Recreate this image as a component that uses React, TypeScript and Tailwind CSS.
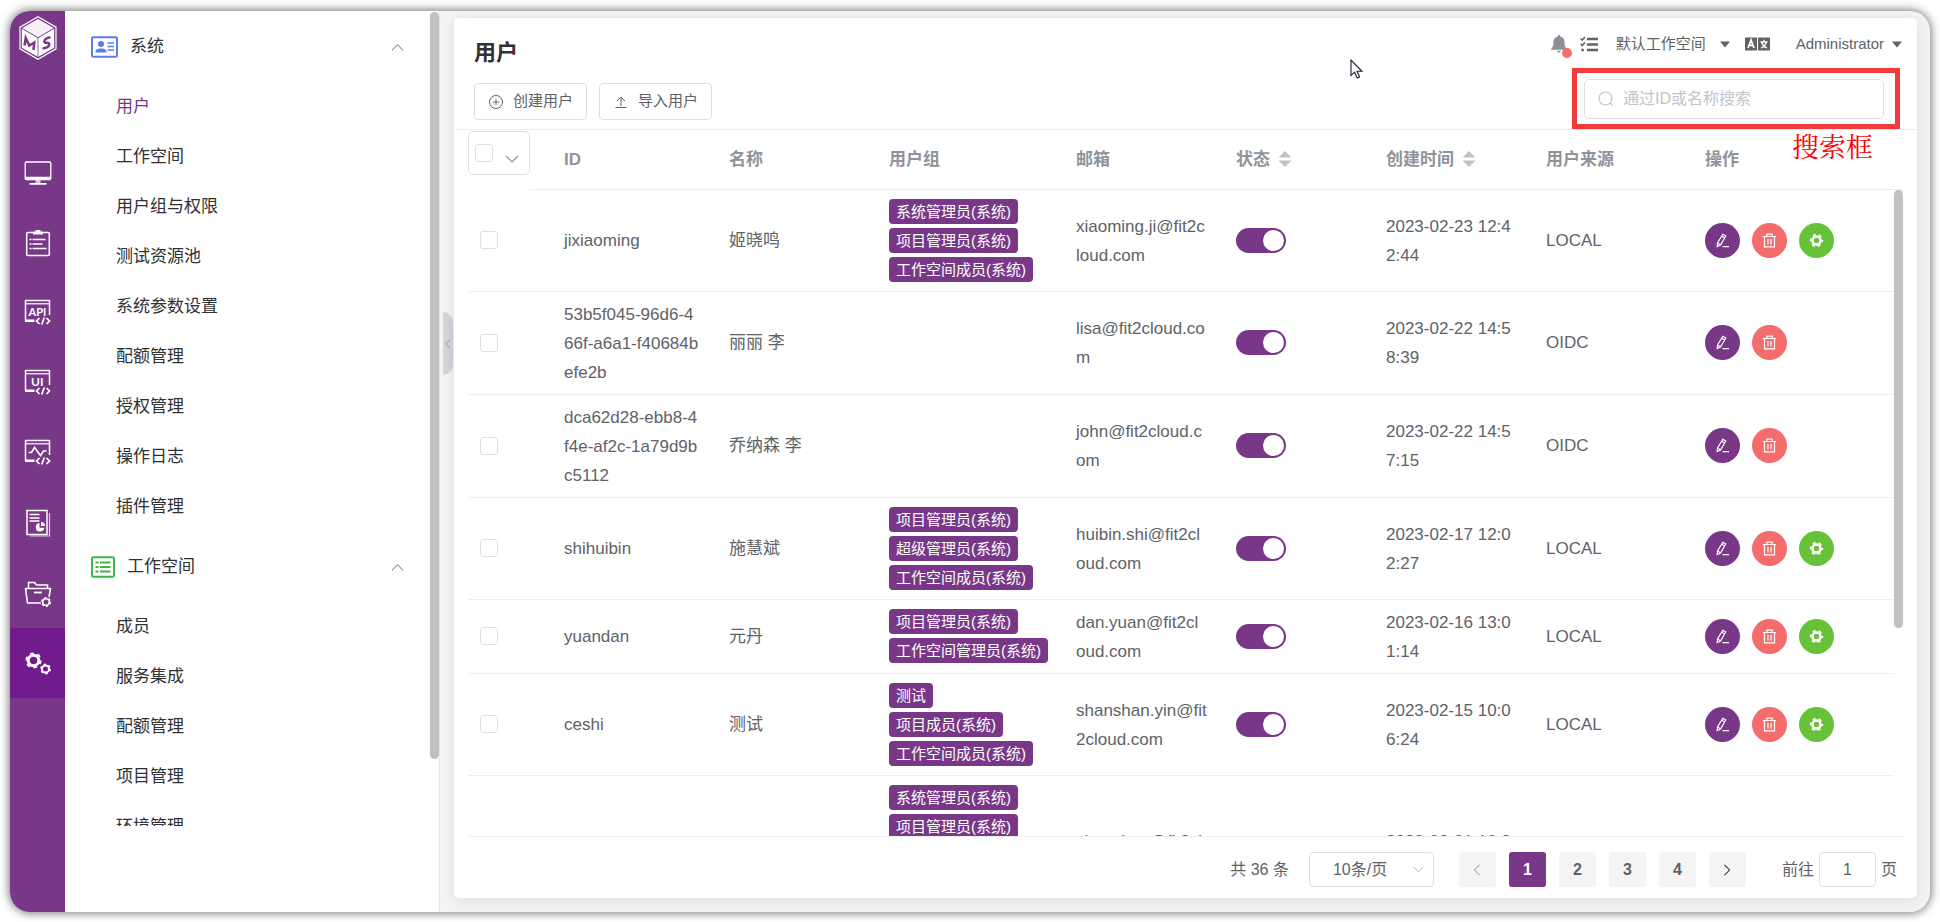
import React from "react";

type User = {
  id: string;
  name: string;
  groups: string[];
  email: string;
  created: string;
  source: "LOCAL" | "OIDC";
};

const users: User[] = [
  {
    id: "jixiaoming",
    name: "姬晓鸣",
    groups: ["系统管理员(系统)", "项目管理员(系统)", "工作空间成员(系统)"],
    email: "xiaoming.ji@fit2cloud.com",
    created: "2023-02-23 12:42:44",
    source: "LOCAL",
  },
  {
    id: "53b5f045-96d6-466f-a6a1-f40684befe2b",
    name: "丽丽 李",
    groups: [],
    email: "lisa@fit2cloud.com",
    created: "2023-02-22 14:58:39",
    source: "OIDC",
  },
  {
    id: "dca62d28-ebb8-4f4e-af2c-1a79d9bc5112",
    name: "乔纳森 李",
    groups: [],
    email: "john@fit2cloud.com",
    created: "2023-02-22 14:57:15",
    source: "OIDC",
  },
  {
    id: "shihuibin",
    name: "施慧斌",
    groups: ["项目管理员(系统)", "超级管理员(系统)", "工作空间成员(系统)"],
    email: "huibin.shi@fit2cloud.com",
    created: "2023-02-17 12:02:27",
    source: "LOCAL",
  },
  {
    id: "yuandan",
    name: "元丹",
    groups: ["项目管理员(系统)", "工作空间管理员(系统)"],
    email: "dan.yuan@fit2cloud.com",
    created: "2023-02-16 13:01:14",
    source: "LOCAL",
  },
  {
    id: "ceshi",
    name: "测试",
    groups: ["测试", "项目成员(系统)", "工作空间成员(系统)"],
    email: "shanshan.yin@fit2cloud.com",
    created: "2023-02-15 10:06:24",
    source: "LOCAL",
  },
  {
    id: "xianghao",
    name: "向浩",
    groups: ["系统管理员(系统)", "项目管理员(系统)", "项目成员(系统)", "工作空间成员(系统)", "工作空间管理员(系统)"],
    email: "xiang.hao@fit2cloud.com",
    created: "2023-02-01 10:26:11",
    source: "LOCAL",
  },
];

const systemItems = ["用户", "工作空间", "用户组与权限", "测试资源池", "系统参数设置", "配额管理", "授权管理", "操作日志", "插件管理"];
const workspaceItems = ["成员", "服务集成", "配额管理", "项目管理", "环境管理"];

/* ---------- icons ---------- */

function Logo() {
  return (
    <svg width="38" height="44" viewBox="0 0 38 44" fill="none" aria-hidden="true">
      <path d="M19 .8L37 11.200v21.600L19 43.200 1 32.800V11.200z" stroke="#fff" strokeWidth="1.200" />
      <path d="M19 3L34.800 12 19 21.200 3.200 12z" fill="#f6f1f8" />
      <path d="M2.800 12.800l15.800 9.200v18.800L2.800 31.700z" fill="#fff" />
      <path d="M35.200 12.800L19.400 22v18.800l15.800-9.100z" fill="#fff" />
      <path d="M5.500 29.500l1.200-7.500 3.600 7.500 5-3-.8 7.500" stroke="#783887" strokeWidth="2.500" />
      <path d="M31.500 21.500c-2.500-.3-6 1.500-6.200 4-.2 2.300 5.300.3 5 3-.3 2.400-4 4-6.800 3.700" stroke="#783887" strokeWidth="2.500" />
    </svg>
  );
}

function CodeMark() {
  return <path d="M15.500 19l-3 3 3 3M22.500 19l3 3-3 3M20.300 18.500l-2.600 7" stroke="#fff" strokeWidth="1.700" />;
}

function WindowFrame({ children }: { children?: React.ReactNode }) {
  return (
    <svg width="28" height="28" viewBox="0 0 28 28" fill="none" aria-hidden="true">
      <path d="M10 21.500H1.500V1.500h24V16" stroke="#fff" strokeWidth="1.500" strokeLinejoin="round" />
      <path d="M1.500 4.800h24" stroke="#fff" strokeWidth="1.200" />
      <path d="M1 21.800h9.500" stroke="#fff" strokeWidth="2.400" />
      {children}
      <CodeMark />
    </svg>
  );
}

const railIcons: { label: string; icon: React.ReactNode }[] = [
  {
    label: "工作台",
    icon: (
      <svg width="28" height="28" viewBox="0 0 28 28" fill="none" aria-hidden="true">
        <rect x="1.200" y="3" width="25.600" height="17.500" rx="1.200" stroke="#fff" strokeWidth="1.300" />
        <path d="M1 19h26" stroke="#fff" strokeWidth="2.600" />
        <path d="M14 20v4" stroke="#fff" strokeWidth="5" opacity=".7" />
        <path d="M5.500 24.800h17" stroke="#fff" strokeWidth="1.800" />
      </svg>
    ),
  },
  {
    label: "测试跟踪",
    icon: (
      <svg width="28" height="28" viewBox="0 0 28 28" fill="none" aria-hidden="true">
        <path d="M9 3.500H3.700a1 1 0 0 0-1 1v21a1 1 0 0 0 1 1h20.600a1 1 0 0 0 1-1v-21a1 1 0 0 0-1-1H19" stroke="#fff" strokeWidth="1.500" />
        <path d="M9 5.500V2.500h2.500V1h5v1.500H19v3z" fill="#fff" />
        <path d="M5.500 10.500h2M5.500 15h2M5.500 19.500h2M8.500 10.500h13M8.500 15h10M8.500 19.500h14" stroke="#fff" strokeWidth="1.500" />
      </svg>
    ),
  },
  {
    label: "接口测试",
    icon: (
      <WindowFrame>
        <text x="4.500" y="16.500" fill="#fff" fontFamily="Lato, sans-serif" fontWeight="700" fontSize="11">API</text>
      </WindowFrame>
    ),
  },
  {
    label: "UI 测试",
    icon: (
      <WindowFrame>
        <text x="7" y="17" fill="#fff" fontFamily="Lato, sans-serif" fontWeight="700" fontSize="12">UI</text>
      </WindowFrame>
    ),
  },
  {
    label: "性能测试",
    icon: (
      <WindowFrame>
        <path d="M4.500 13.500h3l3-5 6 8 3-4.500h3" stroke="#fff" strokeWidth="1.600" />
      </WindowFrame>
    ),
  },
  {
    label: "报表统计",
    icon: (
      <svg width="28" height="28" viewBox="0 0 28 28" fill="none" aria-hidden="true">
        <rect x="3" y="1.500" width="20" height="24" stroke="#fff" strokeWidth="1.500" />
        <path d="M25.500 4v23H6" stroke="#fff" strokeWidth="1.200" opacity=".75" />
        <path d="M5.500 5.500h10M5.500 9h10M5.500 12h10" stroke="#fff" strokeWidth="1.500" />
        <path d="M15.500 14a4.300 4.300 0 1 0 4.800 4.800h-4.800z" fill="#fff" />
        <path d="M17 13a4 4 0 0 1 4 4h-4z" fill="#fff" />
      </svg>
    ),
  },
  {
    label: "项目设置",
    icon: (
      <svg width="28" height="28" viewBox="0 0 28 28" fill="none" aria-hidden="true">
        <path d="M4.500 9V3.500h6l2 2.500h11v3" stroke="#fff" strokeWidth="1.500" />
        <path d="M17 24H3.500L1.500 9.500h25L25 18" stroke="#fff" strokeWidth="1.600" strokeLinejoin="round" />
        <path d="M10 13.500h8" stroke="#fff" strokeWidth="1.800" />
        <circle cx="22" cy="23" r="3.300" stroke="#fff" strokeWidth="1.600" />
        <circle cx="22" cy="23" r="4.400" stroke="#fff" strokeWidth="1.200" strokeDasharray="2.300 2.300" />
      </svg>
    ),
  },
  {
    label: "系统设置",
    icon: (
      <svg width="28" height="28" viewBox="0 0 28 28" fill="none" aria-hidden="true">
        <circle cx="9.500" cy="11.500" r="5.300" stroke="#fff" strokeWidth="3" />
        <circle cx="9.500" cy="11.500" r="7.200" stroke="#fff" strokeWidth="1.800" strokeDasharray="3.770 3.770" />
        <circle cx="21.500" cy="20" r="3.500" stroke="#fff" strokeWidth="2" />
        <circle cx="21.500" cy="20" r="4.700" stroke="#fff" strokeWidth="1.400" strokeDasharray="2.460 2.460" />
      </svg>
    ),
  },
];

function Chevron({ dir, size = 14, color = "#909399" }: { dir: "up" | "down" | "left" | "right"; size?: number; color?: string }) {
  const d = {
    up: "M1 10l6-6 6 6",
    down: "M1 4l6 6 6-6",
    left: "M10 1L4 7l6 6",
    right: "M4 1l6 6-6 6",
  }[dir];
  return (
    <svg width={size} height={size} viewBox="0 0 14 14" fill="none" className="shrink-0" aria-hidden="true">
      <path d={d} stroke={color} strokeWidth="1.200" />
    </svg>
  );
}

function Caret() {
  return (
    <svg width="10" height="7" viewBox="0 0 10 7" className="shrink-0" aria-hidden="true">
      <path d="M0 .5h10L5 6.500z" fill="#606266" />
    </svg>
  );
}

function SortArrows() {
  return (
    <svg width="14" height="16" viewBox="0 0 14 16" aria-hidden="true">
      <path d="M.5 6.500h13L7 0zM.5 9.500h13L7 16z" fill="#c0c4cc" />
    </svg>
  );
}

function EditIcon() {
  return (
    <svg width="15" height="15" viewBox="0 0 15 15" fill="none" stroke="#fff" strokeWidth="1.200" aria-hidden="true">
      <path d="M7.800 1.200l3 1.800-5.300 9-3.300 1.600.3-3.600zM6.700 3.200l3 1.800M2.500 10l3 1.800M7.500 13.600h6.500" />
    </svg>
  );
}

function TrashIcon() {
  return (
    <svg width="15" height="15" viewBox="0 0 15 15" fill="none" stroke="#fff" strokeWidth="1.200" aria-hidden="true">
      <path d="M.8 3.500h13.400M4.800 3.300V1.200h5.400v2.100M2.500 3.500v10.300h10V3.500M6 6v5.500M9 6v5.500" />
    </svg>
  );
}

function GearIcon() {
  return (
    <svg width="15" height="15" viewBox="0 0 15 15" fill="none" aria-hidden="true">
      <circle cx="7.500" cy="7.500" r="4" stroke="#fff" strokeWidth="2.600" />
      <circle cx="7.500" cy="7.500" r="5.800" stroke="#fff" strokeWidth="1.800" strokeDasharray="3.040 3.040" strokeDashoffset="1.500" />
    </svg>
  );
}

/* ---------- sidebar ---------- */

function MenuGroup({ title, icon, items, active }: { title: string; icon: React.ReactNode; items: string[]; active?: string }) {
  return (
    <section>
      <button type="button" className="flex h-[70px] w-full items-center pr-[26px] pl-[26px] text-left">
        {icon}
        <span className="ml-3 flex-1">{title}</span>
        <Chevron dir="up" size={13} />
      </button>
      <ul>
        {items.map((item) => (
          <li key={item}>
            <a href="#" className={item === active ? "block pl-[51px] leading-[50px] text-[#783887]" : "block pl-[51px] leading-[50px]"}>
              {item}
            </a>
          </li>
        ))}
      </ul>
    </section>
  );
}

function Sidebar() {
  return (
    <aside className="flex w-[375px] shrink-0 border-r border-[#e4e6ea] bg-white pt-px text-[17px] text-[#303133]">
      <nav className="mb-[86px] min-w-0 flex-1 overflow-hidden" aria-label="设置菜单">
        <MenuGroup
          title="系统"
          active="用户"
          items={systemItems}
          icon={
            <svg width="27" height="22" viewBox="0 0 27 22" fill="none" aria-hidden="true">
              <rect x="1" y="1.200" width="25" height="19.600" rx="1.500" stroke="#5b7bf0" strokeWidth="2" />
              <circle cx="10" cy="8" r="3" fill="#5b7bf0" />
              <path d="M4.500 16.500c0-3 2-4 5.500-4s5.500 1 5.500 4z" fill="#5b7bf0" />
              <path d="M16.500 7h6.500M16.500 10.500h6.500M16.500 14h6.500" stroke="#5b7bf0" strokeWidth="1.500" />
            </svg>
          }
        />
        <MenuGroup
          title="工作空间"
          items={workspaceItems}
          icon={
            <svg width="24" height="22" viewBox="0 0 24 22" fill="none" aria-hidden="true">
              <rect x="1" y="1.200" width="22" height="19.600" rx="1.500" stroke="#3fb54a" strokeWidth="2" />
              <path d="M4.500 6.500h3M4.500 11h3M4.500 15.500h3M9 6.500h10.500M9 11h10.500M9 15.500h10.500" stroke="#3fb54a" strokeWidth="2" />
            </svg>
          }
        />
      </nav>
      <div className="h-[83%] w-[9px] shrink-0 rounded-full bg-[#c1c1c1]" />
    </aside>
  );
}

/* ---------- header ---------- */

function TopBar() {
  return (
    <div className="flex items-center text-[15px] text-[#606266]">
      <button type="button" aria-label="通知" className="relative mr-3 h-[24px] w-[18px]">
        <svg width="18" height="20" viewBox="0 0 18 20" fill="#8d9095" aria-hidden="true">
          <path d="M9 1c.9 0 1.300.6 1.300 1.400 2.900.6 4.200 3 4.200 5.600 0 4 .8 5.500 2.500 7v.8H1V15c1.700-1.500 2.500-3 2.500-7 0-2.600 1.300-5 4.200-5.600C7.700 1.600 8.100 1 9 1zM7 16.800h4c0 1-.8 1.700-2 1.700s-2-.7-2-1.700z" />
        </svg>
        <span className="absolute -right-1 -bottom-0.5 size-2.5 rounded-full bg-[#f56c6c]" />
      </button>
      <button type="button" aria-label="任务中心" className="mr-[18px]">
        <svg width="18" height="17" viewBox="0 0 18 17" fill="none" stroke="#606266" aria-hidden="true">
          <path d="M7 3h11M7 8.500h11M7 14h11" strokeWidth="2.400" />
          <path d="M.6 2.500l1.600 1.600L5 1M.6 8l1.600 1.600L5 6.500" strokeWidth="1.500" />
          <circle cx="2.600" cy="14" r="1" fill="#606266" />
        </svg>
      </button>
      <button type="button" className="mr-[15px] flex items-center gap-[14px]">
        默认工作空间
        <Caret />
      </button>
      <button type="button" aria-label="切换语言" className="mr-[26px]">
        <svg width="25" height="14" viewBox="0 0 25 14" fill="none" aria-hidden="true">
          <rect width="12" height="13" y=".5" fill="#606266" />
          <rect width="12" height="13" x="13" y=".5" fill="#606266" />
          <path d="M3 11l3-8 3 8M4 8.300h4" stroke="#fff" strokeWidth="1.800" />
          <path d="M15.500 5h7M19 2.800V5M21.300 5c-.5 3-2.500 5-5.300 6M16.800 5.500c.8 2.500 2.500 4.500 5.200 5.500" stroke="#fff" strokeWidth="1.300" />
        </svg>
      </button>
      <button type="button" className="flex items-center gap-2">
        Administrator
        <Caret />
      </button>
    </div>
  );
}

function ActionButton({ label, children }: { label: string; children: React.ReactNode }) {
  return (
    <button type="button" className="flex h-[37px] items-center gap-[9px] rounded-[4px] border border-[#dcdfe6] px-[13px] text-[15px] text-[#606266]">
      {children}
      {label}
    </button>
  );
}

function CardHeader() {
  return (
    <header className="flex h-[112px] shrink-0 justify-between border-b border-[#ebeef5] pl-5">
      <div className="pt-[19px]">
        <h1 className="text-[22px] leading-8 font-bold text-[#303133]">用户</h1>
        <div className="mt-[14px] flex gap-3">
          <ActionButton label="创建用户">
            <svg width="16" height="16" viewBox="0 0 16 16" fill="none" stroke="#606266" aria-hidden="true">
              <circle cx="8" cy="8" r="6.500" />
              <path d="M8 5v6M5 8h6" />
            </svg>
          </ActionButton>
          <ActionButton label="导入用户">
            <svg width="16" height="16" viewBox="0 0 16 16" fill="none" stroke="#606266" aria-hidden="true">
              <path d="M8 12V3M4 7l4-4 4 4M2.500 13.500h11" />
            </svg>
          </ActionButton>
        </div>
      </div>
      <div className="flex flex-col items-end pt-[14px]">
        <div className="pr-[15px]">
          <TopBar />
        </div>
        <div className="relative mt-auto mr-[17px] w-[328px] border-5 border-[#f43b3b] pt-[6px] pr-[11px] pb-[5px] pl-[7px]">
          <label className="flex h-[40px] items-center gap-[9px] rounded-[5px] border border-[#dcdfe6] px-[13px]">
            <svg width="16" height="16" viewBox="0 0 16 16" fill="none" stroke="#c0c4cc" strokeWidth="1.200" aria-hidden="true">
              <circle cx="7.500" cy="7.500" r="6.500" />
              <path d="M12.200 12.200l2.500 2.500" />
            </svg>
            <input
              type="text"
              aria-label="搜索"
              placeholder="通过ID或名称搜索"
              className="min-w-0 flex-1 bg-transparent text-[16px] outline-none placeholder:text-[#c0c4cc]"
            />
          </label>
          <span className="absolute top-full right-[22px] mt-1 font-['Noto_Serif_CJK_SC','Noto_Serif_SC',serif] text-[27px] leading-9 text-[#ff0000]">搜索框</span>
        </div>
      </div>
    </header>
  );
}

/* ---------- table ---------- */

const checkboxClass = "block size-[18px] appearance-none rounded-[3px] border border-[#dcdfe6] bg-white checked:bg-[#783887]";

function UserRow({ user }: { user: User }) {
  return (
    <tr className="border-b border-[#ebeef5]">
      <td className="pl-3">
        <input type="checkbox" aria-label={user.id} className={checkboxClass} />
      </td>
      <td />
      <td className="pt-2 pr-[16px] pb-[7px] pl-[14px] break-all">{user.id}</td>
      <td className="px-[13px]">{user.name}</td>
      <td className="px-[13px] py-[7px]">
        {user.groups.map((group) => (
          <div key={group} className="flex h-[29px] items-center">
            <span className="rounded-[4px] bg-[#783887] px-[7px] text-[15px] leading-[25px] whitespace-nowrap text-white">{group}</span>
          </div>
        ))}
      </td>
      <td className="pt-2 pr-[16px] pb-[7px] pl-[13px] break-all">{user.email}</td>
      <td className="px-[13px]">
        <input
          type="checkbox"
          defaultChecked
          aria-label={`${user.id} 状态`}
          className="relative block h-[25px] w-[50px] appearance-none rounded-full bg-[#dcdfe6] after:absolute after:top-[2px] after:left-[2px] after:size-[21px] after:rounded-full after:bg-white checked:bg-[#783887] checked:after:left-[27px]"
        />
      </td>
      <td className="pt-2 pr-[16px] pb-[7px] pl-[13px] break-all">{user.created}</td>
      <td className="px-[13px]">{user.source}</td>
      <td className="px-[12px]">
        <div className="flex gap-3">
          <button type="button" aria-label="编辑" className="flex size-[35px] items-center justify-center rounded-full bg-[#783887]">
            <EditIcon />
          </button>
          <button type="button" aria-label="删除" className="flex size-[35px] items-center justify-center rounded-full bg-[#f56c6c]">
            <TrashIcon />
          </button>
          {user.source === "LOCAL" && (
            <button type="button" aria-label="设置" className="flex size-[35px] items-center justify-center rounded-full bg-[#67c23a]">
              <GearIcon />
            </button>
          )}
        </div>
      </td>
    </tr>
  );
}

function UserTable() {
  return (
    <div className="mr-[14px] ml-[14px] flex min-h-0 flex-1 overflow-hidden border-b border-[#ebeef5]">
      <div className="min-w-0 flex-1">
        <table className="w-full table-fixed border-collapse text-[17px] leading-[29px] text-[#606266]">
          <colgroup>
            <col className="w-[62px]" />
            <col className="w-[20px]" />
            <col className="w-[166px]" />
            <col className="w-[160px]" />
            <col className="w-[187px]" />
            <col className="w-[160px]" />
            <col className="w-[150px]" />
            <col className="w-[160px]" />
            <col className="w-[160px]" />
            <col />
          </colgroup>
          <thead>
            <tr className="h-[59px] text-left text-[#909399]">
              <th className="p-0 align-top">
                <div className="mt-px flex h-[44px] items-center rounded-[5px] border border-[#dcdfe6] pl-1.5">
                  <input type="checkbox" aria-label="全选" className={checkboxClass} />
                  <button type="button" aria-label="选择范围" className="mt-3 ml-3">
                    <Chevron dir="down" />
                  </button>
                </div>
              </th>
              <th className="border-b border-[#ebeef5]" />
              <th className="border-b border-[#ebeef5] pl-[14px]">ID</th>
              <th className="border-b border-[#ebeef5] pl-[13px]">名称</th>
              <th className="border-b border-[#ebeef5] pl-[13px]">用户组</th>
              <th className="border-b border-[#ebeef5] pl-[13px]">邮箱</th>
              <th className="border-b border-[#ebeef5] pl-[13px]">
                <span className="flex items-center gap-2">状态 <SortArrows /></span>
              </th>
              <th className="border-b border-[#ebeef5] pl-[13px]">
                <span className="flex items-center gap-2">创建时间 <SortArrows /></span>
              </th>
              <th className="border-b border-[#ebeef5] pl-[13px]">用户来源</th>
              <th className="border-b border-[#ebeef5] pl-[12px]">操作</th>
            </tr>
          </thead>
          <tbody>
            {users.map((user) => (
              <UserRow key={user.id} user={user} />
            ))}
          </tbody>
        </table>
      </div>
      <div className="flex w-[9px] shrink-0 flex-col">
        <div className="h-[60px] shrink-0 border-b border-[#ebeef5]" />
        <div className="h-[62%] rounded-full bg-[#c1c1c1]" />
      </div>
    </div>
  );
}

/* ---------- pagination ---------- */

function Pagination() {
  return (
    <footer className="flex h-[61px] shrink-0 items-center justify-end pt-1 pr-[20px] text-[16px] text-[#606266]">
      <span>共 36 条</span>
      <div className="relative ml-5 w-[125px]">
        <select aria-label="每页条数" className="h-[35px] w-full appearance-none rounded-[4px] border border-[#dcdfe6] bg-white pl-[23px] outline-none">
          <option>10条/页</option>
          <option>20条/页</option>
          <option>50条/页</option>
        </select>
        <span className="pointer-events-none absolute inset-y-0 right-[10px] flex items-center">
          <Chevron dir="down" size={11} color="#a8abb2" />
        </span>
      </div>
      <div className="ml-[25px] flex gap-[13px] font-bold">
        <button type="button" aria-label="上一页" disabled className="flex h-[35px] w-[37px] items-center justify-center rounded-[3px] bg-[#f4f4f5]">
          <Chevron dir="left" size={12} color="#a8abb2" />
        </button>
        {[1, 2, 3, 4].map((page) => (
          <button
            key={page}
            type="button"
            className={page === 1 ? "h-[35px] w-[37px] rounded-[3px] bg-[#783887] text-white" : "h-[35px] w-[37px] rounded-[3px] bg-[#f4f4f5]"}
          >
            {page}
          </button>
        ))}
        <button type="button" aria-label="下一页" className="flex h-[35px] w-[37px] items-center justify-center rounded-[3px] bg-[#f4f4f5]">
          <Chevron dir="right" size={12} color="#303133" />
        </button>
      </div>
      <label className="ml-9 flex items-center gap-[5px]">
        前往
        <input type="text" defaultValue="1" className="h-[35px] w-[57px] rounded-[4px] border border-[#dcdfe6] text-center outline-none" />
        页
      </label>
    </footer>
  );
}

export default function App() {
  return (
    <div className="relative h-screen bg-white px-[10px] pt-[11px] pb-[10px] font-['Liberation_Sans','Noto_Sans_CJK_SC',sans-serif]">
      <div className="flex h-full overflow-hidden rounded-[20px] bg-[#f3f4f6] shadow-[0_0_10px_1px_rgba(0,0,0,0.55)]">
        <nav className="flex w-[55px] shrink-0 flex-col bg-[#783887]" aria-label="主导航">
          <a href="#" aria-label="MeterSphere" className="flex h-[127px] justify-center pt-[5px]">
            <Logo />
          </a>
          {railIcons.map(({ label, icon }, index) => (
            <a
              key={label}
              href="#"
              aria-label={label}
              className={
                index === railIcons.length - 1
                  ? "flex h-[70px] items-center justify-center bg-[#721b8c]"
                  : "flex h-[70px] items-center justify-center"
              }
            >
              {icon}
            </a>
          ))}
        </nav>
        <Sidebar />
        <div className="flex w-[14px] shrink-0 items-start justify-end pt-[301px] pr-px">
          <button type="button" aria-label="收起菜单" className="flex h-[63px] w-[10px] items-center rounded-r-[10px] bg-[#d3d7dc]">
            <Chevron dir="left" size={10} color="#909399" />
          </button>
        </div>
        <main className="mt-[7px] mr-[13px] mb-[14px] flex min-w-0 flex-1 flex-col rounded-[5px] bg-white shadow-[0_2px_15px_rgba(0,0,0,0.1)]">
          <CardHeader />
          <UserTable />
          <Pagination />
        </main>
      </div>
      <svg width="14" height="21" viewBox="0 0 14 21" className="absolute top-[59px] left-[1350px]" aria-hidden="true">
        <path d="M1 1v15.500l3.600-3.300 2.600 5.800 2.400-1-2.500-5.700H12z" fill="#fff" stroke="#1f2030" strokeWidth="1.100" />
      </svg>
    </div>
  );
}
